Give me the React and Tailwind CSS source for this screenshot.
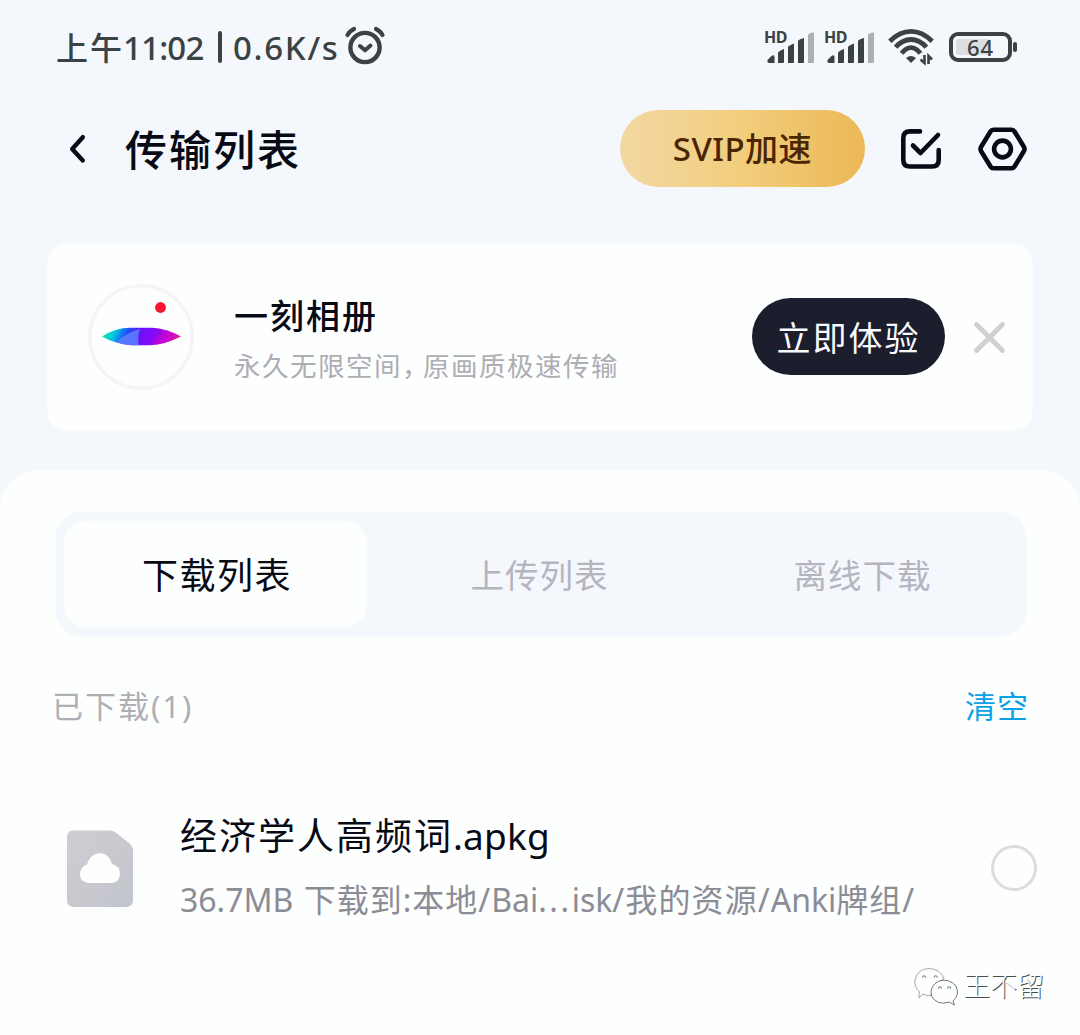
import React from "react";

function AlarmIcon() {
  return (
    <svg width="42" height="42" viewBox="0 0 42 42" fill="none" stroke="#3b4244" strokeLinecap="round" strokeLinejoin="round">
      <circle cx="21" cy="23.5" r="14.6" strokeWidth="4.4" />
      <path d="M3.5 11 Q6 6.6 10 5 M38.5 11 Q36 6.6 32 5" strokeWidth="4.2" />
      <path d="M16 22 L21 26.3 L26.5 21.5" strokeWidth="4" />
    </svg>
  );
}

function Signal() {
  return (
    <span className="relative block h-[36px] w-[50px]">
      <span className="absolute top-[-1px] left-[-1px] text-[16px] leading-[18px] font-bold tracking-[-0.4px] text-[#3b4244]">HD</span>
      <svg width="50" height="36" viewBox="0 0 50 36" fill="#3b4244">
        <path d="M2.5 31 L6 27.5 Q9.5 25 9.5 28 V34 H4 Q2 34 2.5 31Z" />
        <path d="M13 24 Q13.5 22 19 20 V33 Q19 34 18 34 H13Z" />
        <path d="M23 18 Q23.5 16.5 29 14.5 V33 Q29 34 28 34 H23Z" />
        <path d="M33 12 Q33.5 10.5 39 9 V33 Q39 34 38 34 H33Z" />
        <path d="M43 6 Q43.5 4 49 3.5 V33 Q49 34 48 34 H43Z" fill="#adb0b2" />
      </svg>
    </span>
  );
}

function Wifi() {
  return (
    <svg width="47" height="38" viewBox="0 0 47 38" fill="none" stroke="#3b4244" strokeWidth="4.8">
      <path d="M1.8 13.2 Q12 3.4 23 3.4 Q34 3.4 44.2 13.2" />
      <path d="M7.6 19.2 Q14.5 11.5 23 11.5 Q31.5 11.5 38.4 19.2" />
      <path d="M13.6 25.4 Q18 19.6 23 19.6 Q28 19.6 32.4 25.4" />
      <path d="M18 30 Q23 25.8 28 30 L23 35Z" fill="#3b4244" stroke="none" />
      <path d="M36.5 27 V35 L32.5 31.5 M40.5 36 V28 L44 31.5" strokeWidth="2.6" />
    </svg>
  );
}

function Battery() {
  return (
    <span className="relative block h-[30px] w-[68px]">
      <svg width="68" height="30" viewBox="0 0 68 30">
        <rect x="2" y="2" width="59" height="26" rx="7" fill="none" stroke="#3b4244" strokeWidth="4" />
        <rect x="7" y="7" width="34" height="16" rx="2" fill="#dcdfe1" />
        <rect x="64" y="10" width="4" height="10" rx="2" fill="#3b4244" />
      </svg>
      <span className="absolute top-0 left-[18px] text-[22px] leading-[30px] font-medium tracking-[1px] text-[#3b4244]">64</span>
    </span>
  );
}

function StatusBar() {
  return (
    <div className="flex h-[94px] items-center pr-[63px] pl-[56px] text-[33px] leading-[40px] font-medium whitespace-nowrap text-[#3b4244]">
      <span className="w-[67px] shrink-0 pt-px text-[32px] tracking-[2px]">上午</span>
      <span className="w-[95px] shrink-0 pt-px tracking-[-0.8px]">11:02</span>
      <span className="h-[32px] w-[4px] shrink-0 rounded bg-[#3b4244]" />
      <span className="ml-[11px] w-[111px] shrink-0 pt-px tracking-[1.7px]">0.6K/s</span>
      <span className="-mt-1"><AlarmIcon /></span>
      <span className="ml-auto flex items-center">
        <Signal />
        <span className="w-[10px]" />
        <Signal />
        <span className="w-[13px]" />
        <Wifi />
        <span className="w-[14px]" />
        <Battery />
      </span>
    </div>
  );
}

function Header() {
  return (
    <header className="flex h-[110px] items-center">
      <svg className="ml-[68px] shrink-0" width="20" height="30" viewBox="0 0 20 30" fill="none" stroke="#080a16" strokeWidth="4.4" strokeLinecap="round" strokeLinejoin="round">
        <path d="M14.8 3.2 L4.2 15 L14.8 26.5" />
      </svg>
      <h1 className="ml-[37px] pt-[2px] text-[42px] leading-[50px] font-medium tracking-[2px] text-[#080a16]">传输列表</h1>
      <button className="mb-[2px] ml-auto flex h-[77px] w-[245px] items-center justify-center rounded-full bg-linear-to-r from-[#f3d8a2] via-[#f2cd7c] to-[#ebb855] pt-[2px] text-[33px] font-medium tracking-[0.5px] text-[#4a2605]">
        SVIP加速
      </button>
      <svg className="ml-[35px]" width="42" height="42" viewBox="0 0 42 42" fill="none" stroke="#080a16" strokeWidth="4.6" strokeLinecap="round" strokeLinejoin="round">
        <path d="M20 3.4 H10 Q3.3 3.4 3.3 10 V32 Q3.3 38.5 10 38.5 H32 Q38.7 38.5 38.7 32 V22" />
        <path d="M13 17.5 L20.5 25 L38 7" />
      </svg>
      <svg className="mr-[53px] ml-[36px]" width="49" height="44" viewBox="0 0 49 44" fill="none" stroke="#080a16" strokeWidth="4.6" strokeLinejoin="round">
        <path d="M15.5 2.8 H33.5 Q35.5 2.8 36.5 4.5 L46 20 Q47 22 46 24 L36.5 39.5 Q35.5 41.2 33.5 41.2 H15.5 Q13.5 41.2 12.5 39.5 L3 24 Q2 22 3 20 L12.5 4.5 Q13.5 2.8 15.5 2.8Z" />
        <circle cx="24.5" cy="22" r="8.4" />
      </svg>
    </header>
  );
}

function AlbumLogo() {
  return (
    <svg className="shrink-0" width="106" height="106" viewBox="0 0 106 106">
      <defs>
        <linearGradient id="lens" x1="0" x2="1" y1="0" y2="0.12">
          <stop offset="0" stopColor="#8ed936" />
          <stop offset="0.08" stopColor="#08e3b4" />
          <stop offset="0.2" stopColor="#08c3e4" />
          <stop offset="0.34" stopColor="#1c52f5" />
          <stop offset="0.48" stopColor="#6513fb" />
          <stop offset="0.7" stopColor="#8908f3" />
          <stop offset="0.9" stopColor="#d505c0" />
          <stop offset="1" stopColor="#f02560" />
        </linearGradient>
        <clipPath id="lensShape">
          <path d="M14 52.5 Q27 44 42 43.8 H64 Q78 44.5 93 52.5 Q76 61 62 61.2 H44 Q27 60 14 52.5Z" />
        </clipPath>
      </defs>
      <circle cx="53" cy="53" r="51.2" fill="#fdfefe" stroke="#f5f5f7" strokeWidth="3.6" />
      <g clipPath="url(#lensShape)">
        <rect x="14" y="43" width="80" height="19" fill="url(#lens)" />
        <path d="M26 62 Q32 51 52 45 Q49 53 51 62Z" fill="#5b83ff" opacity="0.85" />
        <path d="M63 62 Q71 52 79 45 L93 52 Q79 60 63 62Z" fill="#c408dc" opacity="0.5" />
      </g>
      <circle cx="72.5" cy="23.5" r="5.4" fill="#fb1430" />
    </svg>
  );
}

function PromoCard() {
  return (
    <section className="mx-[48px] mt-[40px] flex h-[186px] items-center rounded-[18px] bg-[#fdfefe] pl-[40px] shadow-[0_0_5px_#fdfefe]">
      <AlbumLogo />
      <div className="ml-[40px] pt-[8px]">
        <div className="text-[34px] leading-[50px] font-medium tracking-[2px] text-[#080a16]">一刻相册</div>
        <div className="text-[26.5px] leading-[50px] tracking-[1.5px] whitespace-nowrap text-[#adadb4]">
          永久无限空间<span className="inline-block w-[21px] [font-feature-settings:'halt']">，</span>原画质极速传输
        </div>
      </div>
      <button className="mb-[1px] ml-auto flex h-[77px] w-[193px] items-center justify-center rounded-full bg-[#1c1d2d] pt-[3px] text-[34px] tracking-[2px] text-[#f8faff]">
        立即体验
      </button>
      <svg className="mr-[26px] ml-[28px]" width="33" height="33" viewBox="0 0 33 33" stroke="#d0d0d1" strokeWidth="4.8" strokeLinecap="round">
        <path d="M3.5 3.5 L29.5 29.5 M29.5 3.5 L3.5 29.5" />
      </svg>
    </section>
  );
}

function Tabs() {
  return (
    <nav className="mr-[54px] ml-[56px] flex h-[124px] items-center rounded-[26px] bg-[#f4f7fb] pl-[8px] text-[33.5px] tracking-[1px] text-[#b4b5bf] shadow-[0_0_3px_#f4f7fb]">
      <div className="flex h-[106px] w-[302px] items-center justify-center rounded-[22px] bg-[#fdfefe] pt-[4px] pl-[4px] text-[36px] tracking-[1.5px] text-[#080a16] shadow-[0_0_4px_#fdfefe]">下载列表</div>
      <div className="ml-[12px] flex w-[323px] items-center justify-center pt-[2px]">上传列表</div>
      <div className="flex w-[323px] items-center justify-center pt-[2px]">离线下载</div>
    </nav>
  );
}

function FileRow() {
  return (
    <div className="flex h-[132px] items-center pr-[43px] pl-[67px]">
      <svg className="mb-[2px] shrink-0" width="66" height="77" viewBox="0 0 66 77">
        <defs>
          <linearGradient id="file" x1="0" x2="1" y1="0" y2="1">
            <stop offset="0" stopColor="#cdced3" />
            <stop offset="1" stopColor="#c3c5cc" />
          </linearGradient>
        </defs>
        <path d="M6 0.5 H43 Q47 0.5 50 3.5 L62 13 Q66 16 66 21 V70 Q66 77 59 77 H7 Q0 77 0 70 V7 Q0 0.5 6 0.5Z" fill="url(#file)" />
        <path d="M22 53 Q13 52 13 44.5 Q13 37 20 34.5 Q23 23.5 33.5 23 Q42 23.5 45 34 Q53 36 53 44 Q53 51.5 45 53Z" fill="#fdfefe" />
      </svg>
      <div className="mb-[2px] ml-[47px] whitespace-nowrap">
        <div className="text-[37px] leading-[64px] text-[#080a16]">
          <span className="tracking-[2px]">经济学人高频词</span><span className="tracking-[0.2px]">.apkg</span>
        </div>
        <div className="text-[32px] leading-[64px] text-[#8b8c96]">
          36.7MB <span className="ml-[2px] tracking-[1px]">下载到:本地/</span>Bai<span className="tracking-[2.6px]">...</span>isk<span className="tracking-[1.1px]">/我的资源/</span>Anki<span className="tracking-[1px]">牌组/</span>
        </div>
      </div>
      <span className="mb-[2px] ml-auto h-[46px] w-[46px] rounded-full border-[3.5px] border-[#dcdcdf]" />
    </div>
  );
}

function Watermark() {
  return (
    <div className="mt-[31px] mr-[36px] flex h-[40px] items-center justify-end">
      <svg width="46" height="42" viewBox="0 0 46 42" fill="#fdfefe" stroke="#777b7c" strokeWidth="1">
        <path d="M10 29 L6 33 Q5.5 30 6.5 27 Q1 22 2 15 Q4 4 16 3.5 Q28 4 31 14 Q20 18 18.5 27 Q18 29 18.5 30.5 Q13 31 10 29Z" strokeOpacity="0.65" />
        <path d="M36 37 Q24 41 18.5 31 Q16 21 26 16 Q36 13 43 21 Q47 30 40 36 L41.5 40Z" />
        <path d="M9.5 12.5 Q11 9 13 12.5 M21 12.5 Q22.5 9 24.5 12.5 M25 23.5 Q27 20 28.5 23.5 M34.5 23.5 Q36 20 38 23.5" fill="none" strokeWidth="1.2" />
      </svg>
      <span className="ml-[4px] text-[27px] leading-[40px] font-light text-[#fdfefe] [text-shadow:1px_1px_0_#484d4e]">王不留</span>
    </div>
  );
}

export default function App() {
  return (
    <main className="h-[1035px] w-[1080px] overflow-hidden bg-[#f4f7fb] font-['Noto_Sans','Noto_Sans_CJK_SC',sans-serif]" lang="zh-CN">
      <StatusBar />
      <Header />
      <PromoCard />
      <section className="mt-[41px] h-[564px] rounded-t-[38px] bg-[#fdfefe] pt-[41px] shadow-[0_0_4px_#fdfefe]">
        <Tabs />
        <div className="mt-[45px] flex h-[50px] items-center justify-between pr-[51px] pl-[52px]">
          <span className="text-[31px] tracking-[2px] text-[#adafb5]">已下载(1)</span>
          <span className="text-[31px] tracking-[1px] text-[#0ba3e5]">清空</span>
        </div>
        <div className="mt-[72px]"><FileRow /></div>
        <Watermark />
      </section>
    </main>
  );
}
